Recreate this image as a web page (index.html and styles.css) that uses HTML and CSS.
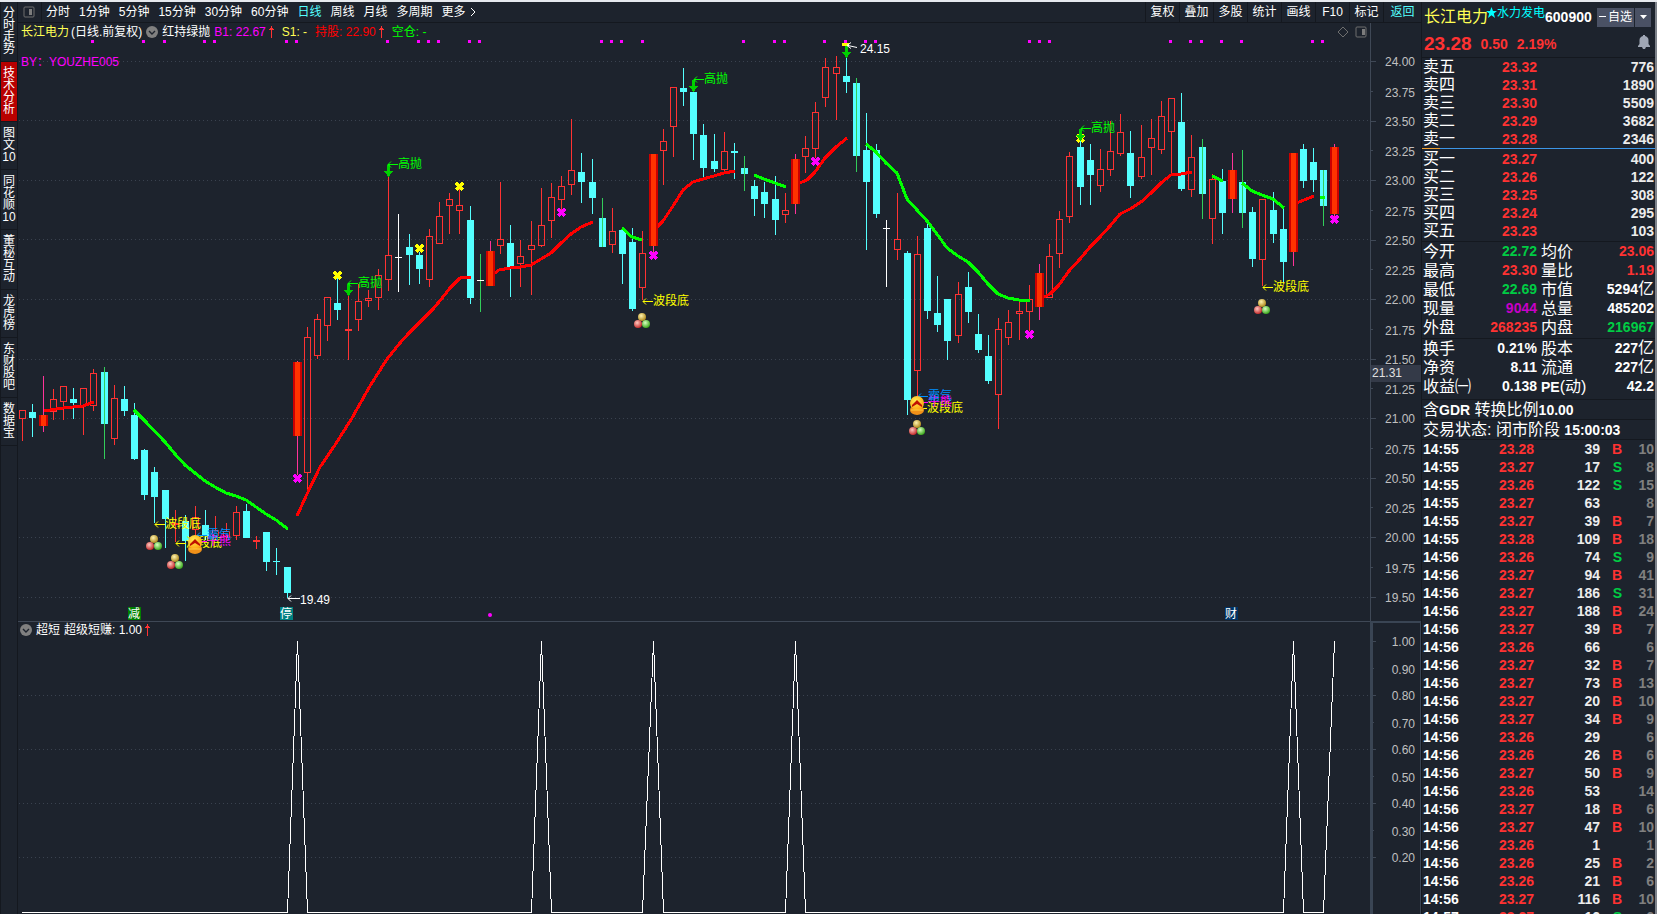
FILE: index.html
```html
<!DOCTYPE html>
<html lang="zh-CN">
<head>
<meta charset="utf-8">
<title>长江电力 600900</title>
<link rel="stylesheet" href="styles.css">
</head>
<body>
<div class="app">
  <nav class="side">
    <button class="side-tab">分时走势</button>
    <button class="side-tab active">技术分析</button>
    <button class="side-tab">图文10</button>
    <button class="side-tab">同花顺10</button>
    <button class="side-tab">董秘互动</button>
    <button class="side-tab">龙虎榜</button>
    <button class="side-tab">东财股吧</button>
    <button class="side-tab">数据宝</button>
  </nav>

  <main class="main">
    <header class="toolbar">
      <button class="layout-btn" aria-label="布局">
        <svg width="12" height="12" viewBox="0 0 12 12"><rect x="1" y="1" width="10" height="10" rx="1" fill="none" stroke="#6e6e6e"/><rect x="6" y="3" width="3" height="6" fill="#7c7c7c"/></svg>
      </button>
      <div class="periods">
        <button>分时</button><button>1分钟</button><button>5分钟</button><button>15分钟</button><button>30分钟</button><button>60分钟</button><button class="on">日线</button><button>周线</button><button>月线</button><button>多周期</button>
        <button class="more">更多<svg width="6" height="10" viewBox="0 0 6 10"><path d="M1 1l4 4-4 4" fill="none" stroke="#fff"/></svg></button>
      </div>
      <div class="tools">
        <button>复权</button><button>叠加</button><button>多股</button><button>统计</button><button>画线</button><button>F10</button><button>标记</button><button class="on back">返回</button>
      </div>
    </header>

    <section class="pane">
      <svg class="plot" id="kline" viewBox="18 23 1403 598"></svg>
      <div class="legend">
        <span class="yellow">长江电力</span><span>(日线.前复权)</span>
        <svg class="chev" width="12" height="12" viewBox="0 0 12 12"><circle cx="6" cy="6" r="6" fill="#808080"/><path d="M3 5l3 3 3-3" fill="none" stroke="#1d232d" stroke-width="1.4"/></svg>
        <span>红持绿抛</span>
        <span class="magenta reading">B1: 22.67<svg width="5" height="12" viewBox="0 0 5 12"><path d="M2 0h1v2h1v1h1v1H3v8H2V4H0V3h1V2h1z" fill="#ff3232"/></svg></span>
        <span class="yellow reading">S1: -</span>
        <span class="red reading">持股: 22.90<svg width="5" height="12" viewBox="0 0 5 12"><path d="M2 0h1v2h1v1h1v1H3v8H2V4H0V3h1V2h1z" fill="#ff3232"/></svg></span>
        <span class="green reading">空仓: -</span>
      </div>
      <div class="pane-tools">
        <svg width="12" height="12" viewBox="0 0 12 12"><path d="M6 1l5 5-5 5-5-5z" fill="none" stroke="#6e6e6e"/></svg>
        <svg width="12" height="12" viewBox="0 0 12 12"><rect x="1" y="1" width="10" height="10" rx="1" fill="none" stroke="#6e6e6e"/><rect x="7" y="3" width="3" height="6" fill="#7c7c7c"/></svg>
      </div>
    </section>

    <section class="pane">
      <svg class="plot" id="signal" viewBox="18 621 1403 293"></svg>
      <div class="legend low">
        <svg class="chev" width="12" height="12" viewBox="0 0 12 12"><circle cx="6" cy="6" r="6" fill="#808080"/><path d="M3 5l3 3 3-3" fill="none" stroke="#1d232d" stroke-width="1.4"/></svg>
        <span>超短</span>
        <span class="reading">超级短赚: 1.00<svg width="5" height="12" viewBox="0 0 5 12"><path d="M2 0h1v2h1v1h1v1H3v8H2V4H0V3h1V2h1z" fill="#ff3232"/></svg></span>
      </div>
    </section>
  </main>

  <aside class="quote">
    <div class="head">
      <div class="title">
        <span class="name">长江电力</span>
        <svg class="star" width="11" height="12" viewBox="0 0 11 12"><path d="M5.500 0l1.500 4h4l-3.200 2.600L9 11 5.500 8.300 2 11l1.200-4.400L0 4h4z" fill="#00ffff"/></svg>
        <span class="sector">水力发电</span>
        <span class="code">600900</span>
        <button class="watch"><svg width="7" height="2" viewBox="0 0 7 2"><path d="M0 0h7v1H0z" fill="#fff"/></svg>自选</button>
        <button class="drop" aria-label="更多自选"><svg width="7" height="4" viewBox="0 0 7 4"><path d="M0 0h7L3.500 4z" fill="#fff"/></svg></button>
      </div>
      <div class="last">
        <span class="price">23.28</span><span>0.50</span><span>2.19%</span>
        <button class="bell" aria-label="提醒"><svg width="12" height="14" viewBox="0 0 12 14"><path d="M5 0h2v1c2 .5 3.500 2 3.500 4v4L12 11v1H0v-1l1.500-2V5C1.500 3 3 1.500 5 1zM4 12h4l-1 2H5z" fill="#a0a7b5"/></svg></button>
      </div>
    </div>

    <table class="book">
      <colgroup><col class="w50"><col class="w64"><col></colgroup>
      <tbody>
      <tr><th>卖五</th><td class="up">23.32</td><td>776</td></tr>
      <tr><th>卖四</th><td class="up">23.31</td><td>1890</td></tr>
      <tr><th>卖三</th><td class="up">23.30</td><td>5509</td></tr>
      <tr><th>卖二</th><td class="up">23.29</td><td>3682</td></tr>
      <tr><th>卖一</th><td class="up">23.28</td><td>2346</td></tr>
      </tbody>
    </table>
    <div class="ratio"></div>
    <table class="book">
      <colgroup><col class="w50"><col class="w64"><col></colgroup>
      <tbody>
      <tr><th>买一</th><td class="up">23.27</td><td>400</td></tr>
      <tr><th>买二</th><td class="up">23.26</td><td>122</td></tr>
      <tr><th>买三</th><td class="up">23.25</td><td>308</td></tr>
      <tr><th>买四</th><td class="up">23.24</td><td>295</td></tr>
      <tr><th>买五</th><td class="up">23.23</td><td>103</td></tr>
      </tbody>
    </table>

    <table class="stats rule">
      <colgroup><col class="w50"><col class="w64"><col class="w50"><col></colgroup>
      <tbody>
      <tr><th>今开</th><td class="down">22.72</td><th>均价</th><td class="up">23.06</td></tr>
      <tr><th>最高</th><td class="up">23.30</td><th>量比</th><td class="up">1.19</td></tr>
      <tr><th>最低</th><td class="down">22.69</td><th>市值</th><td class="white">5294<span class="unit">亿</span></td></tr>
      <tr><th>现量</th><td class="purple">9044</td><th>总量</th><td class="white">485202</td></tr>
      <tr><th>外盘</th><td class="up">268235</td><th>内盘</th><td class="down">216967</td></tr>
      </tbody>
    </table>
    <table class="stats rule">
      <colgroup><col class="w50"><col class="w64"><col class="w50"><col></colgroup>
      <tbody>
      <tr><th>换手</th><td class="white">0.21%</td><th>股本</th><td class="white">227<span class="unit">亿</span></td></tr>
      <tr><th>净资</th><td class="white">8.11</td><th>流通</th><td class="white">227<span class="unit">亿</span></td></tr>
      <tr><th>收益㈠</th><td class="white">0.138</td><th><b>PE</b>(动)</th><td class="white">42.2</td></tr>
      </tbody>
    </table>
    <p class="note rule gap">含<b>GDR</b> 转换比例<b>10.00</b></p>
    <p class="note rule">交易状态: 闭市阶段 <b>15:00:03</b></p>
    <div class="trades rule">
      <table>
        <colgroup><col class="w50"><col class="w62"><col class="w66"><col class="w22"><col></colgroup>
        <tbody id="ticks"></tbody>
      </table>
    </div>
  </aside>
</div>
<script src="chart.js"></script>
</body>
</html>
```
FILE: styles.css
```css
* { box-sizing: border-box; }

body {
  margin: 0;
  background: #1d232d;
  color: #fff;
  font: 12px/16px "Liberation Sans", "Noto Sans CJK SC", sans-serif;
}

button {
  margin: 0;
  padding: 0;
  border: 0;
  background: none;
  color: inherit;
  font: inherit;
  white-space: nowrap;
  cursor: pointer;
}

.app {
  display: flex;
  height: 100vh;
  overflow: hidden;
  border-top: 2px solid #e6e9ee;
}

/* left tabs */
.side {
  flex: none;
  display: flex;
  flex-direction: column;
  width: 18px;
  border: solid #14181f;
  border-width: 0 1px;
}
.side-tab {
  padding: 5px 1px 6px;
  border-bottom: 1px solid #14181f;
  line-height: 12px;
  white-space: normal;
  word-break: break-all;
  text-align: center;
}
.side-tab.active { background: #b80000; }

/* centre */
.main {
  flex: 1;
  min-width: 0;
}
.toolbar {
  display: flex;
  height: 21px;
  border-bottom: 1px solid #14181f;
  line-height: 20px;
}
.layout-btn {
  display: flex;
  align-items: center;
  padding: 0 6px 0 5px;
  border-right: 1px solid #14181f;
}
.periods {
  display: flex;
  gap: 9px;
  margin-left: 4px;
}
.more { display: flex; align-items: center; gap: 4px; }
.tools { display: flex; margin-left: auto; }
.tools button {
  min-width: 34px;
  padding: 0 4px;
  border-left: 1px solid #14181f;
}
.tools .back { min-width: 38px; }
.on { color: #54ffff; }

.pane { position: relative; }
.plot { display: block; width: 100%; }
.legend {
  position: absolute;
  top: 1px;
  left: 3px;
  display: flex;
  align-items: center;
  gap: 4px;
  white-space: nowrap;
}
.legend.low { left: 2px; }
.legend > span:first-child { margin-right: -2px; }
.reading {
  display: flex;
  align-items: center;
  gap: 3px;
  margin-right: 4px;
}
.pane-tools {
  position: absolute;
  top: 3px;
  right: 54px;
  display: flex;
  gap: 6px;
}

.yellow { color: #ffff54; }
.magenta { color: #ff00ff; }
.red { color: #ff0000; }
.green { color: #00ff00; }

/* chart text */
.axis { fill: #c0c0c0; text-anchor: end; }
.cursor { fill: #e0e0e0; }
.mk { font-size: 12px; }
.tag { fill: #fff; font-size: 12px; }
.crisp { shape-rendering: crispEdges; }

/* right panel */
.quote {
  flex: none;
  width: 236px;
  border-left: 1px solid #14181f;
  border-right: 2px solid #7d828a;
  overflow: hidden;
}
.head {
  height: 56px;
  border-bottom: 1px solid #14181f;
}
.title {
  display: flex;
  align-items: center;
  height: 30px;
  padding: 0 4px 0 2px;
}
.name { color: #ffff54; font-size: 16px; }
.star { margin: 0 0 8px -2px; }
.sector { margin: 0 0 8px; color: #00ffff; }
.code { font-size: 14px; font-weight: bold; }
.watch,
.drop {
  display: flex;
  align-items: center;
  justify-content: center;
  gap: 2px;
  height: 19px;
  background: #4a5164;
}
.watch { width: 37px; margin-left: auto; }
.drop { width: 16px; margin-left: 1px; }
.last {
  display: flex;
  align-items: center;
  gap: 9px;
  padding: 0 5px 0 2px;
  color: #ff3232;
  font-size: 14px;
  font-weight: bold;
  line-height: 24px;
}
.price { font-size: 19px; }
.bell { display: flex; margin: 0 0 4px auto; }

table {
  width: 100%;
  border-collapse: collapse;
  table-layout: fixed;
}
.w22 { width: 22px; }
.w50 { width: 50px; }
.w62 { width: 62px; }
.w64 { width: 65px; }
.w66 { width: 66px; }
th,
td {
  height: 18px;
  padding: 0;
  line-height: 18px;
  white-space: nowrap;
}
th {
  padding-left: 1px;
  font-size: 16px;
  font-weight: normal;
  text-align: left;
}
td {
  color: #ececec;
  font-size: 14px;
  font-weight: bold;
  text-align: right;
}
td:last-child { padding-right: 1px; }
td + th { padding-left: 4px; }
.stats th,
.stats td { height: 19px; line-height: 19px; }
.stats th b,
.unit { line-height: 1; }
.stats b,
.note b { font-size: 14px; }
.unit { font-size: 16px; font-weight: normal; }
.rule { border-top: 1px solid #14181f; }
.stats.rule { margin-top: 1px; }
.ratio {
  height: 1px;
  margin-bottom: 1px;
  background: linear-gradient(90deg, #f0a030 18px, #3c96e8 18px);
}
.note {
  margin: 0;
  padding-left: 1px;
  font-size: 16px;
  line-height: 19px;
  height: 20px;
  white-space: nowrap;
}
.note.gap { margin-top: 3px; }
.trades td:first-child { padding-left: 1px; color: #fff; text-align: left; }
.trades td:last-child { color: #808080; }
td.up, .trades td.up { color: #ff3232; }
td.down, .trades td.down { color: #00cc44; }
td.purple { color: #c800c8; }
td.white { color: #fff; }
```
FILE: chart.js
```js
// Candle rows: kind, high, body top, body bottom, low (chart units).
// U hollow rise, D fall, S signal bar, G fall with green wick,
// R/C/W flat bar in red, cyan, white, V white bar with green wick.
const candles = `U 410 410 419 441|D 404 412 418 437|S 376 415 426 432|U 389 399 412 420|U 386 386 402 420|D 388 399 403 419
U 388 388 406 435|U 369 373 406 411|G 367 372 424 459|U 385 398 439 445|D 386 399 411 416|D 403 415 459 460
D 449 450 495 500|D 467 472 497 523|D 490 490 519 548|R 510 523 525 542|D 515 521 541 561|U 506 517 530 540
D 510 525 536 540|U 516 530 536 540|U 523 531 537 540|U 506 512 536 540|D 504 511 538 538|R 536 540 542 549
D 532 532 562 571|C 548 561 562 575|D 567 567 593 598|S 361 362 436 475|U 327 337 473 493|U 314 319 356 359
U 297 297 326 341|D 278 303 310 320|R 295 329 331 360|U 284 301 320 331|U 290 298 301 307|U 269 275 298 310
U 177 255 280 291|W 214 257 258 292|D 234 247 255 285|D 252 255 269 284|U 229 236 280 287|U 202 216 244 244
U 193 199 206 234|U 189 205 211 234|D 206 220 298 304|V 254 280 281 312|S 241 251 286 286|U 182 239 246 254
D 225 243 267 297|U 240 256 264 287|U 221 245 250 295|U 188 225 246 247|U 183 197 221 238|U 176 186 200 210
U 119 170 185 195|D 153 172 182 203|D 159 182 198 214|G 198 218 247 247|U 208 231 245 253|D 230 230 254 284
D 228 242 309 311|U 231 253 288 300|S 154 154 246 253|U 129 141 151 185|U 87 87 127 157|D 68 88 92 106
D 92 92 134 160|D 124 135 168 177|D 134 161 169 172|U 132 151 170 173|C 143 151 153 179|G 156 168 174 191
D 180 186 199 216|D 182 192 204 218|D 176 199 220 235|U 193 210 215 223|S 154 159 204 214|U 136 148 157 173
U 102 112 149 158|U 58 67 98 107|U 56 67 74 120|D 57 76 82 93|G 78 83 156 172|D 113 150 182 250
D 144 150 214 218|W 220 228 229 287|U 193 239 250 260|D 251 253 400 415|U 236 254 371 397|D 224 228 311 319
D 276 313 325 332|D 299 299 341 360|U 282 294 336 343|D 272 287 312 323|D 314 334 350 353|D 335 356 381 384
U 318 329 395 429|U 310 322 338 345|U 301 311 314 340|U 285 299 312 331|S 264 273 307 320|U 244 256 298 298
U 211 219 254 268|U 152 156 217 223|D 141 147 187 205|D 144 160 175 205|U 149 169 186 192|U 121 151 170 176
U 114 132 154 156|D 131 153 186 198|U 125 157 177 179|U 119 138 148 175|U 101 116 150 154|U 98 98 132 175
D 93 122 189 191|U 135 157 190 197|G 139 147 194 219|U 174 179 219 244|D 169 181 213 234|S 153 170 199 213
G 150 182 213 228|D 207 212 259 267|U 199 199 260 286|D 192 210 234 243|D 209 229 262 283|S 153 153 252 266
D 144 149 181 188|D 148 162 180 192|G 170 170 206 226|S 144 147 214 217`.split(/[|\n]/).map(r => r.split(' '));

const red = '#ff3232', cyan = '#54ffff';
const colX = i => Math.floor(22.83 + 10.1653 * i);
const rect = (x, y, w, h, fill) => `<rect x="${x}" y="${y}" width="${w}" height="${h}" fill="${fill}"/>`;
const text = (x, y, s, cls, fill) => `<text x="${x}" y="${y}" class="${cls}"${fill ? ` fill="${fill}"` : ''}>${s}</text>`;

function candle([k, h, t, b, l], i) {
  const x = colX(i);
  [h, t, b, l] = [h, t, b, l].map(Number);
  const wick = c => rect(x, h, 1, l - h, c);
  if (k === 'U') return rect(x, h, 1, t - h, red) + rect(x, b, 1, l - b, red) +
    `<rect x="${x - 2.5}" y="${t + 0.5}" width="6" height="${b - t - 1}" fill="none" stroke="${red}"/>`;
  if (k === 'D') return wick(cyan) + rect(x - 3, t, 7, b - t, cyan);
  if (k === 'G') return rect(x - 3, t, 7, b - t, cyan) + wick('#32cd5a');
  if (k === 'S') return wick('#ff3399') + rect(x - 4, t, 9, b - t, '#cc0000') + rect(x - 2, t, 5, b - t, '#ff3300');
  const c = { R: red, C: cyan, W: '#fff', V: '#fff' }[k];
  return wick(k === 'V' ? '#32cd5a' : c) + rect(x - 3, t, 7, b - t, c);
}

const trend = [
  ['#ff0000', '43,411 63,408 73,407 83,406 94,402'],
  ['#00ff00', '134,410 144,420 165,442 175,454 185,465 195,473 205,481 215,487 226,493 236,496 246,500 256,507 266,514 276,520 288,529'],
  ['#ff0000', '297,516 307,494 320,467 335,445 352,418 370,386 387,359 400,343 408,334 416,326 433,309 443,297 450,288 460,278 471,277'],
  ['#ff0000', '492,275 499,270 510,268 520,267 531,265 541,259 551,253 561,243 571,234 581,227 593,222'],
  ['#00ff00', '622,228 632,237 642,240'],
  ['#ff0000', '655,229 663,221 673,206 683,190 693,182 703,179 714,176 724,173 735,171'],
  ['#00ff00', '754,175 764,179 775,183 786,187'],
  ['#ff0000', '797,184 807,180 815,172 825,158 836,147 847,138'],
  ['#00ff00', '866,144 876,152 886,163 897,173 907,199 917,210 927,221 937,234 947,248 958,256 968,262 978,272 988,284 998,294 1008,298 1019,300 1030,301'],
  ['#ff0000', '1042,298 1050,294 1059,285 1069,271 1080,259 1090,247 1100,237 1110,226 1120,214 1130,209 1141,202 1151,193 1161,183 1171,175 1181,174 1192,172'],
  ['#00ff00', '1212,176 1223,181'],
  ['#00ff00', '1242,183 1252,191 1262,195 1273,199 1284,208'],
  ['#ff0000', '1294,204 1314,196'],
  ['#00ff00', '1320,197 1325,197']
].map(([c, p]) => `<polyline points="${p}" fill="none" stroke="${c}" stroke-width="3" stroke-linejoin="round"/>`).join('');

const dots = y => `<line x1="19" x2="1370" y1="${y + 0.5}" y2="${y + 0.5}" stroke="#3a424f" stroke-dasharray="1 3"/>`;
const cross = (x, y, c) => `<path d="M${x - 3} ${y - 3}l7 7m0-7l-7 7" stroke="${c}" stroke-width="3"/>`;
const down = (x, y) => `<path d="M${x - 1} ${y}h3v6h3l-4.500 6-4.500-6h3z" fill="#00d000"/>`;
const pointer = (x, y, c, n = 10) => `<path d="M${x} ${y + 0.5}h${n}M${x + 3} ${y - 2.5}l-3 3 3 3" fill="none" stroke="${c}"/>`;
const label = (x, y, s, c) => pointer(x, y, c) + text(x + 10, y + 4, s, 'mk', c);
const balls = (x, y) => `<circle cx="${x}" cy="${y - 3}" r="4" fill="url(#gold)"/><circle cx="${x - 4}" cy="${y + 4}" r="4" fill="url(#rose)"/><circle cx="${x + 4}" cy="${y + 4}" r="4" fill="url(#lime)"/>`;
const coin = (x, y) => `<ellipse cx="${x}" cy="${y + 5}" rx="7" ry="5" fill="#f09018"/><circle cx="${x}" cy="${y - 2}" r="7" fill="url(#coin)"/><path d="M${x - 5} ${y}l5-5 5 5v2l-5-3-5 3z" fill="#c01000"/><path d="M${x - 6} ${y + 5}h12" stroke="#ffd040"/>`;
const tag = (x, s, c) => rect(x, 607, 13, 13, c) + text(x, 618, s, 'tag');

let k = `<defs>${[['gold', '#fff4b0', '#a88010'], ['rose', '#ffc8c0', '#c02020'], ['lime', '#d8ffc0', '#30a010'], ['coin', '#ffee50', '#ffa010']]
  .map(([id, a, b]) => `<radialGradient id="${id}" cx=".4" cy=".35" r=".7"><stop offset="0" stop-color="${a}"/><stop offset="1" stop-color="${b}"/></radialGradient>`).join('')}</defs>`;

k += '<g class="crisp">';
[61, 120, 180, 239, 299, 359, 418, 478, 537, 597].forEach(y => { k += dots(y); });
k += rect(1370, 23, 1, 598, '#3f4856');
k += '</g>';
for (let i = 0; i < 19; i++) {
  const y = Math.round(61 + i * 29.75), minor = i % 2;
  k += rect(1371, y, minor ? 2 : 5, 1, '#3f4856') + text(1415, y + (minor ? 6 : 5), (24 - i * 0.25).toFixed(2), 'axis');
}
k += rect(1371, 365, 50, 17, '#343a48') + text(1372, 377, '21.31', 'cursor');
[92, 143, 164, 204, 214, 286, 296, 387, 418, 428, 438, 469, 479, 601, 611, 621, 642, 743, 774, 784, 824, 845, 865, 875, 1029, 1039, 1049, 1170, 1190, 1201, 1221, 1241, 1312, 1322]
  .forEach(x => { k += rect(x - 1, 40, 3, 3, '#ff00ff'); });
k += text(21, 66, 'BY：YOUZHE005', 'mk', '#ff00ff');
const isSignal = c => c[0] === 'S';
k += '<g class="crisp">' + candles.map((c, i) => isSignal(c) ? '' : candle(c, i)).join('') + trend +
  candles.map((c, i) => isSignal(c) ? candle(c, i) : '').join('');
[[337, 275], [419, 248], [459, 186], [1080, 138]].forEach(p => { k += cross(...p, '#ffff00'); });
k += rect(842, 43, 7, 3, '#ffff00');
[[297, 478], [561, 212], [653, 255], [815, 161], [1029, 334], [1334, 219]].forEach(p => { k += cross(...p, '#ff00ff'); });
[[388, 165], [348, 284], [693, 80], [846, 46], [1080, 129]].forEach(p => { k += down(...p); });
k += '</g>';
[[388, 164], [348, 283], [694, 79], [1081, 128]].forEach(([x, y]) => { k += label(x, y, '高抛', '#00ff00'); });
[[155, 524], [176, 543], [643, 301], [917, 408], [1263, 287]].forEach(([x, y]) => { k += label(x, y, '波段底', '#ffff00'); });
[[197, 535], [918, 396]].forEach(([x, y]) => { k += label(x, y + 6, '牛熊', '#ff00ff') + label(x, y, '霸气', '#0090ff'); });
k += coin(195, 544) + coin(917, 405);
[[154, 542], [175, 561], [642, 320], [917, 427], [1262, 306]].forEach(p => { k += balls(...p); });
k += '<path d="M848 45.500l9 2M851 42.500l-4 3 4 3" fill="none" stroke="#fff"/>' + text(860, 53, '24.15', 'mk', '#fff');
k += pointer(288, 598, '#fff', 12) + text(300, 604, '19.49', 'mk', '#fff');
k += tag(128, '减', '#008000') + tag(280, '停', '#008080') + tag(1225, '财', '#003366');
k += '<circle cx="490" cy="615" r="2" fill="#ff00ff"/>';
document.getElementById('kline').innerHTML = k;

// Lower pane: one-day spikes on the signal days.
let s = '<g class="crisp">' + rect(18, 621, 1403, 1, '#3f4856') + rect(1370, 621, 3, 293, '#3a4554') + rect(1371, 621, 50, 2, '#3a4554') + rect(1420, 621, 1, 293, '#3a4554');
[695, 749, 803, 857].forEach(y => { s += dots(y); });
let path = 'M22 912.500';
[27, 51, 62, 76, 125].forEach(i => { path += `H${colX(i - 1) + 0.5}L${colX(i) + 0.5} 641L${colX(i + 1) + 0.5} 912.500`; });
path += `H${colX(128) + 0.5}L1334.500 641`;
s += `<path d="${path}" fill="none" stroke="#fff"/></g>`;
for (let i = 0; i < 9; i++) {
  const y = 641 + i * 27;
  s += rect(1373, y, i % 2 ? 1 : 3, 1, '#3f4856') + text(1415, y + (i % 2 ? 6 : 5), (1 - i * 0.1).toFixed(2), 'axis');
}
document.getElementById('signal').innerHTML = s;

const ticks = `55 28 39 B 10|55 27 17 S 8|55 26 122 S 15|55 27 63 - 8|55 27 39 B 7|55 28 109 B 18|56 26 74 S 9|56 27 94 B 41|56 27 186 S 31
56 27 188 B 24|56 27 39 B 7|56 26 66 - 6|56 27 32 B 7|56 27 73 B 13|56 27 20 B 10|56 27 34 B 9|56 26 29 - 6|56 26 26 B 6|56 27 50 B 9
56 26 53 - 14|56 27 18 B 6|56 27 47 B 10|56 26 1 - 1|56 26 25 B 2|56 26 21 B 6|56 27 116 B 10|57 27 16 S 6`.split(/[|\n]/);
document.getElementById('ticks').innerHTML = ticks.map(r => {
  const [m, p, v, side, n] = r.split(' ');
  return `<tr><td>14:${m}</td><td class="up">23.${p}</td><td>${v}</td><td class="${side === 'B' ? 'up' : 'down'}">${side === '-' ? '' : side}</td><td>${n}</td></tr>`;
}).join('');
```
